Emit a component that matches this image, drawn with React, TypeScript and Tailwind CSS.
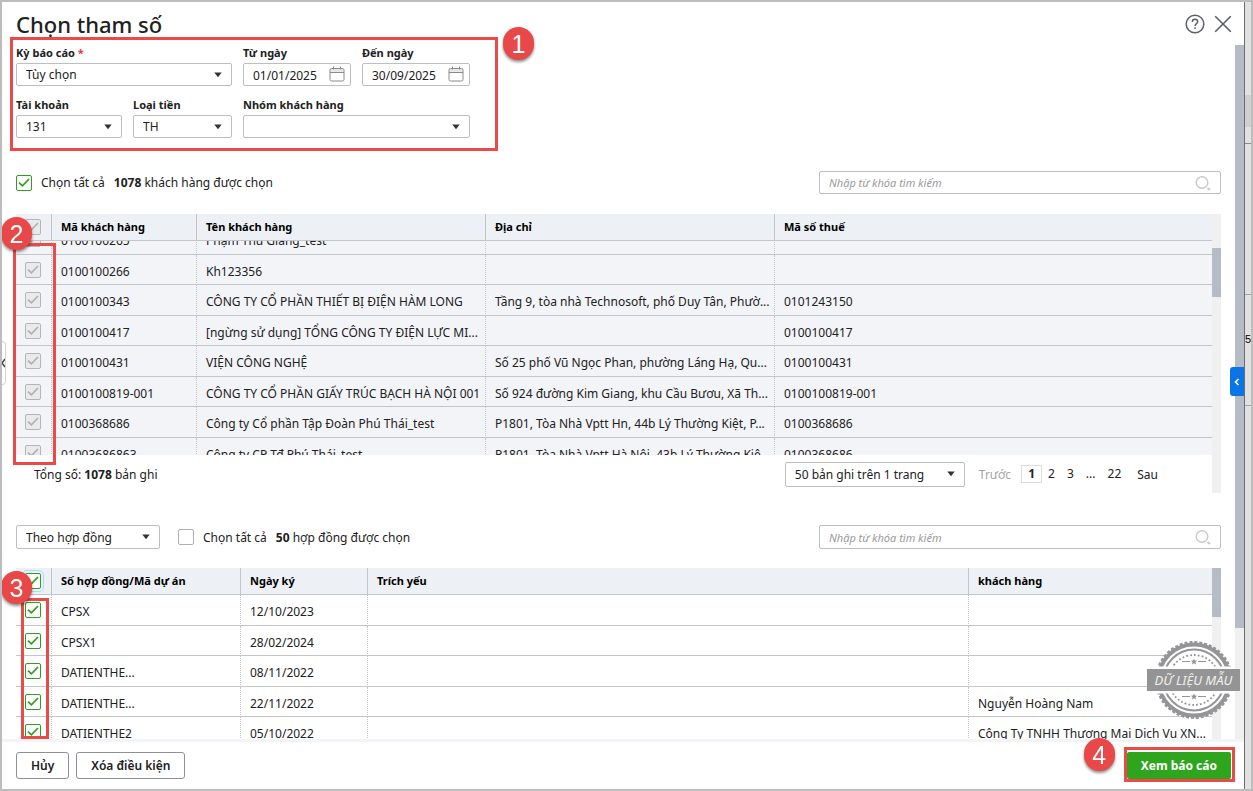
import React, { useLayoutEffect, useRef, useState } from "react";

type Column = { key: string; label: string; width: string };
type Row = { [key: string]: string };

const customerColumns: Column[] = [
  { key: "code", label: "Mã khách hàng", width: "w-[145px]" },
  { key: "name", label: "Tên khách hàng", width: "w-[289px]" },
  { key: "address", label: "Địa chỉ", width: "w-[289px]" },
  { key: "tax", label: "Mã số thuế", width: "" },
];

const customers: Row[] = [
  { code: "0100100265", name: "Phạm Thu Giang_test", address: "", tax: "" },
  { code: "0100100266", name: "Kh123356", address: "", tax: "" },
  { code: "0100100343", name: "CÔNG TY CỔ PHẦN THIẾT BỊ ĐIỆN HÀM LONG", address: "Tầng 9, tòa nhà Technosoft, phố Duy Tân, Phườ...", tax: "0101243150" },
  { code: "0100100417", name: "[ngừng sử dụng] TỔNG CÔNG TY ĐIỆN LỰC MI...", address: "", tax: "0100100417" },
  { code: "0100100431", name: "VIỆN CÔNG NGHỆ", address: "Số 25 phố Vũ Ngọc Phan, phường Láng Hạ, Qu...", tax: "0100100431" },
  { code: "0100100819-001", name: "CÔNG TY CỔ PHẦN GIẤY TRÚC BẠCH HÀ NỘI 001", address: "Số 924 đường Kim Giang, khu Cầu Bươu, Xã Th...", tax: "0100100819-001" },
  { code: "0100368686", name: "Công ty Cổ phần Tập Đoàn Phú Thái_test", address: "P1801, Tòa Nhà Vptt Hn, 44b Lý Thường Kiệt, P...", tax: "0100368686" },
  { code: "01003686863", name: "Công ty CP Tđ Phú Thái_test", address: "P1801, Tòa Nhà Vptt Hà Nội, 43b Lý Thường Kiệ...", tax: "0100368686" },
];

const contractColumns: Column[] = [
  { key: "code", label: "Số hợp đồng/Mã dự án", width: "w-[189px]" },
  { key: "date", label: "Ngày ký", width: "w-[127px]" },
  { key: "summary", label: "Trích yếu", width: "" },
  { key: "customer", label: "khách hàng", width: "w-[243px]" },
];

const contracts: Row[] = [
  { code: "CPSX", date: "12/10/2023", summary: "", customer: "" },
  { code: "CPSX1", date: "28/02/2024", summary: "", customer: "" },
  { code: "DATIENTHE...", date: "08/11/2022", summary: "", customer: "" },
  { code: "DATIENTHE...", date: "22/11/2022", summary: "", customer: "Nguyễn Hoàng Nam" },
  { code: "DATIENTHE2", date: "05/10/2022", summary: "", customer: "Công Ty TNHH Thương Mại Dịch Vụ XN..." },
];

const Checkbox = ({ id, label, defaultChecked, disabled, glow }: { id?: string; label?: string; defaultChecked?: boolean; disabled?: boolean; glow?: boolean }) => (
  <span className="relative block size-4 shrink-0">
    <input
      id={id}
      type="checkbox"
      aria-label={label}
      defaultChecked={defaultChecked}
      disabled={disabled}
      className={`peer block size-4 appearance-none rounded-[2px] border border-[#afafaf] bg-white checked:border-[#2ca01c] disabled:border-[#b5b5b5] disabled:bg-[#e9eaec] ${glow ? "outline outline-offset-2 outline-[#a9dcf8]" : ""}`}
    />
    <svg viewBox="0 0 16 16" className="pointer-events-none absolute inset-0 hidden size-4 fill-none stroke-[#2ca01c] stroke-[1.7] peer-checked:block peer-disabled:stroke-[#b0b0b0]">
      <path d="M3 7.6 6.4 10.8 13 4" />
    </svg>
  </span>
);

const Select = ({ id, label, options, className }: { id: string; label?: string; options: string[]; className: string }) => (
  <div className={`relative ${className}`}>
    <select id={id} aria-label={label} className="block size-full appearance-none rounded-[2px] border border-[#babec5] bg-white pt-px pr-6 pl-[9px] outline-none">
      {options.map((item) => (
        <option key={item}>{item}</option>
      ))}
    </select>
    <svg viewBox="0 0 8 6" className="pointer-events-none absolute top-1/2 right-2.5 h-1.5 w-2 -translate-y-1/2 fill-[#333]">
      <path d="M.3.600h7.400L4 5.300z" />
    </svg>
  </div>
);

const DateField = ({ id, value }: { id: string; value: string }) => (
  <div className="relative h-[23px]">
    <input id={id} type="text" defaultValue={value} className="block size-full rounded-[2px] border border-[#babec5] bg-white pt-px pr-6 pl-[9px] outline-none" />
    <svg viewBox="0 0 16 16" className="pointer-events-none absolute top-[3px] right-1.5 size-4 fill-none stroke-[#8a8a8a]">
      <rect x="1" y="2.5" width="14" height="12.5" rx="1.5" />
      <path d="M2 4.500h12" className="stroke-[#e4e4e4]" strokeWidth="2.5" />
      <path d="M1 6.500h14M4.500.5v3M11.500.5v3" />
    </svg>
  </div>
);

const SearchBox = ({ label, className }: { label: string; className: string }) => (
  <div className={`relative w-[402px] ${className}`}>
    <input type="search" aria-label={label} placeholder="Nhập từ khóa tìm kiếm" className="block size-full rounded-[2px] border border-[#babec5] bg-white pr-8 pl-[9px] text-[11px] outline-none placeholder:text-[#999] placeholder:italic" />
    <svg viewBox="0 0 16 16" className="pointer-events-none absolute top-1/2 right-2.5 size-4 -translate-y-1/2 fill-none stroke-[#c9c9c9] stroke-[1.4]">
      <circle cx="7" cy="7.5" r="5.8" />
      <path d="M12.500 13l2.500 2" strokeWidth="2" />
    </svg>
  </div>
);

const Field = ({ id, label, required, className, children }: { id: string; label: string; required?: boolean; className: string; children: React.ReactNode }) => (
  <div className={`flex flex-col gap-0.5 ${className}`}>
    <label htmlFor={id} className="text-[11px] leading-4 font-bold">
      {label} {required && <span className="text-[#f03232]">*</span>}
    </label>
    {children}
  </div>
);

const Badge = ({ value, className }: { value: number; className: string }) => (
  <span className={`absolute z-30 flex h-[33px] w-[31px] items-center justify-center rounded-full bg-[#e84848] font-['Liberation_Sans',sans-serif] text-[25px] leading-8 text-white shadow-[0_2px_3px_rgba(0,0,0,0.45)] ${className}`}>
    {value}
  </span>
);

const Frame = ({ className }: { className: string }) => (
  <span className={`pointer-events-none absolute z-20 border-3 border-[#ea4b49] ${className}`} />
);

const Scrollbar = ({ thumb }: { thumb: string }) => (
  <div className="w-[9px] shrink-0 bg-[#f0f0f0]">
    <div className={`bg-[#b6bcc5] ${thumb}`} />
  </div>
);

const DataTable = ({ name, columns, rows, locked, offset = 0 }: { name: string; columns: Column[]; rows: Row[]; locked?: boolean; offset?: number }) => {
  const box = useRef<HTMLDivElement>(null);

  useLayoutEffect(() => {
    if (box.current) box.current.scrollTop = offset;
  }, [offset]);

  return (
    <div ref={box} className={`min-h-0 flex-1 overflow-hidden ${locked ? "bg-[#f3f4f8]" : "bg-white"}`}>
      <table aria-label={name} className="w-full table-fixed border-separate border-spacing-0 text-left">
        <thead className="sticky top-0 z-10 bg-[#edf0f5]">
          <tr className="h-[27px]">
            <th className="w-9 border-r border-b border-[#c4c5c8] p-0 pl-[9px]">
              <Checkbox label="Chọn tất cả các dòng" defaultChecked disabled={locked} glow={!locked} />
            </th>
            {columns.map((col) => (
              <th key={col.key} className={`border-r border-b border-[#c4c5c8] p-0 pl-[9px] text-[11px] font-bold text-black last:border-r-0 ${col.width}`}>
                {col.label}
              </th>
            ))}
          </tr>
        </thead>
        <tbody>
          {rows.map((row, index) => (
            <tr key={index} className="odd:h-[31px] even:h-[30px]">
              <td className="border-r border-b border-[#c4c5c8] [border-right-style:dotted] p-0 pl-[9px]">
                <Checkbox label={row.code} defaultChecked disabled={locked} />
              </td>
              {columns.map((col) => (
                <td key={col.key} className="truncate border-r border-b border-[#c4c5c8] [border-right-style:dotted] p-0 pt-1 pl-[9px] last:border-r-0">
                  {row[col.key]}
                </td>
              ))}
            </tr>
          ))}
        </tbody>
      </table>
    </div>
  );
};

const Stamp = () => (
  <div className="pointer-events-none absolute -right-[19px] bottom-[19px] z-20 flex h-20 w-[93px] items-center justify-center">
    <svg viewBox="0 0 80 80" className="absolute size-20 fill-none stroke-[#959597]">
      <circle cx="40" cy="40" r="35.5" strokeWidth="4" className="fill-white" />
      <circle cx="40" cy="40" r="37.8" strokeWidth="2.4" strokeDasharray="3 1.95" />
      <circle cx="40" cy="40" r="30.5" strokeWidth="2" />
      <circle cx="40" cy="40" r="25" strokeWidth="1.8" strokeDasharray="1.8 2.1" />
      <path d="M28 21.500h8M44 21.500h8M28 56.500h8M44 56.500h8" />
      <path d="M40 18.500l.9 2 2.200.2-1.600 1.500.5 2.200-2-1.200-2 1.200.5-2.200-1.600-1.500 2.200-.2zM40 53.500l.9 2 2.200.2-1.600 1.500.5 2.200-2-1.200-2 1.200.5-2.200-1.600-1.500 2.200-.2z" className="fill-[#959597] stroke-none" />
      <path d="M2 26.500h76v27H2z" className="fill-white stroke-none" />
    </svg>
    <span className="relative w-full bg-[#949496] text-center text-[13px] leading-[22px] text-[#f1f0ea] italic">DỮ LIỆU MẪU</span>
  </div>
);

const App: React.FC = () => {
  const [page, setPage] = useState("1");

  return (
    <div className="flex h-screen overflow-hidden border-2 border-[#bdbdbd] bg-white font-['Noto_Sans',sans-serif] text-[12px] leading-4 text-[#212121]">
      <main className="relative flex min-w-0 flex-1 flex-col">
        <header className="flex h-[43px] shrink-0 items-center justify-between pr-[11px] pl-3.5">
          <h1 className="text-[22px] leading-10 font-medium">Chọn tham số</h1>
          <div className="flex items-center gap-2 text-[#5c5f66]">
            <button type="button" aria-label="Trợ giúp" className="size-5">
              <svg viewBox="0 0 20 20" className="size-5 fill-none stroke-current stroke-[1.5]">
                <circle cx="10" cy="10" r="8.8" />
                <path d="M7.300 8c0-1.700 1.200-2.700 2.700-2.700s2.700 1 2.700 2.400c0 2-2.600 2-2.600 4.300M10.100 13.300v1.700" />
              </svg>
            </button>
            <button type="button" aria-label="Đóng" className="size-5">
              <svg viewBox="0 0 20 20" className="size-5 fill-none stroke-current stroke-[1.6]">
                <path d="M2.200 2.200l15.600 15.600M17.800 2.200l-15.600 15.600" />
              </svg>
            </button>
          </div>
        </header>

        <div className="flex min-h-0 flex-1">
          <div className="flex min-w-0 flex-1 flex-col px-3.5">
            <form className="relative flex w-[454px] shrink-0 flex-wrap gap-x-[11px] gap-y-[11px]">
              <Field id="period" label="Kỳ báo cáo" required className="w-[216px]">
                <Select id="period" options={["Tùy chọn"]} className="h-[23px]" />
              </Field>
              <Field id="from" label="Từ ngày" className="w-[108px]">
                <DateField id="from" value="01/01/2025" />
              </Field>
              <Field id="to" label="Đến ngày" className="w-[108px]">
                <DateField id="to" value="30/09/2025" />
              </Field>
              <Field id="account" label="Tài khoản" className="w-[106px]">
                <Select id="account" options={["131"]} className="h-[23px]" />
              </Field>
              <Field id="currency" label="Loại tiền" className="w-[99px]">
                <Select id="currency" options={["TH"]} className="h-[23px]" />
              </Field>
              <Field id="group" label="Nhóm khách hàng" className="w-[227px]">
                <Select id="group" options={[""]} className="h-[23px]" />
              </Field>
              <Frame className="-top-2 -right-7 -bottom-[13px] -left-1.5" />
              <Badge value={1} className="-top-[18px] -right-16" />
            </form>

            <div className="mt-[33px] flex shrink-0 items-center justify-between">
              <div className="flex items-center">
                <Checkbox id="all-customers" defaultChecked />
                <label htmlFor="all-customers" className="pl-[9px]">Chọn tất cả</label>
                <span className="pl-[9px]"><b>1078</b> khách hàng được chọn</span>
              </div>
              <SearchBox label="Tìm khách hàng" className="h-[23px]" />
            </div>

            <section className="relative mt-5 flex h-[279px] shrink-0">
              <div className="flex min-w-0 flex-1 flex-col">
                <DataTable name="Khách hàng" columns={customerColumns} rows={customers} locked offset={17} />
                <div className="flex h-[38px] shrink-0 items-center justify-between pr-[54px] pl-[18px]">
                  <span className="pt-0.5">Tổng số: <b>1078</b> bản ghi</span>
                  <nav className="flex items-center">
                    <Select id="page-size" label="Số bản ghi" options={["50 bản ghi trên 1 trang"]} className="h-[25px] w-[180px]" />
                    <button type="button" disabled className="ml-3.5 pt-0.5 text-[#a5a5a5]">Trước</button>
                    <div className="mr-2.5 ml-2.5 flex items-center">
                      {["1", "2", "3", "...", "22"].map((item) => (
                        <button
                          key={item}
                          type="button"
                          onClick={() => setPage(item)}
                          className={page === item ? "w-[21px] border border-[#dcdcdc] font-bold" : "px-1.5"}
                        >
                          {item}
                        </button>
                      ))}
                    </div>
                    <button type="button" className="pt-0.5">Sau</button>
                  </nav>
                </div>
              </div>
              <Scrollbar thumb="mt-[34px] h-[49px]" />
              <Frame className="top-[29px] bottom-7 -left-[3px] w-[43px]" />
              <Badge value={2} className="top-[3px] -left-[15px]" />
            </section>

            <div className="mt-8 flex shrink-0 items-center justify-between">
              <div className="flex items-center">
                <Select id="mode" label="Kiểu chọn" options={["Theo hợp đồng"]} className="mr-[18px] h-6 w-36" />
                <Checkbox id="all-contracts" />
                <label htmlFor="all-contracts" className="pt-px pl-[9px]">Chọn tất cả</label>
                <span className="pt-px pl-[9px]"><b>50</b> hợp đồng được chọn</span>
              </div>
              <SearchBox label="Tìm hợp đồng" className="h-6" />
            </div>

            <section className="relative mt-[19px] flex min-h-0 flex-1">
              <DataTable name="Hợp đồng" columns={contractColumns} rows={contracts} />
              <Scrollbar thumb="h-[49px]" />
              <Frame className="top-[30px] bottom-0 left-[5px] w-7" />
              <Badge value={3} className="top-[3px] -left-[15px]" />
              <Stamp />
            </section>
          </div>
          <Scrollbar thumb="h-[84%]" />
        </div>

        <footer className="flex shrink-0 items-center justify-between border-t-3 border-[#f3f4f8] py-2.5 pr-[13px] pl-3.5">
          <div className="flex gap-[7px]">
            <button type="button" className="h-[27px] rounded-[3px] border border-[#8d9096] px-3.5 font-semibold">Hủy</button>
            <button type="button" className="h-[27px] rounded-[3px] border border-[#8d9096] px-3.5 font-semibold">Xóa điều kiện</button>
          </div>
          <div className="relative">
            <button type="button" className="block h-[27px] rounded-[2px] bg-[#2ea51c] px-3.5 font-bold text-white">Xem báo cáo</button>
            <Frame className="-top-[5px] -right-1 -bottom-[3px] -left-[3px]" />
            <Badge value={4} className="-top-3.5 right-full mr-3" />
          </div>
        </footer>

        <button type="button" aria-label="Mở bảng bên phải" className="absolute top-[365px] right-0 flex h-[29px] w-3.5 items-center justify-center rounded-l-[3px] bg-[#0a75e6]">
          <svg viewBox="0 0 8 8" className="size-2 fill-none stroke-white stroke-[1.6]">
            <path d="M5.500 1 2.500 4l3 3" />
          </svg>
        </button>
        <button type="button" aria-label="Thu gọn menu" className="absolute top-[339px] left-0 flex h-11 w-1 items-center overflow-hidden rounded-r-[4px] border border-l-0 border-[#d5d5d5]">
          <svg viewBox="0 0 4 10" className="h-2.5 w-1 shrink-0 fill-none stroke-[#444] stroke-[1.5]">
            <path d="M3 1 0 5l3 4" />
          </svg>
        </button>
      </main>

      <aside className="flex w-[7px] shrink-0 flex-col overflow-hidden border-l border-[#6d6d6d] bg-[#e1e1e1]">
        <div className="mt-[93px] h-8 bg-[#d0d0d0]" />
        <div className="mt-4 border-t border-[#8a8a8a]" />
        <div className="mt-[150px] border-t border-[#9aa7b5]" />
        <span className="mt-9 font-['Liberation_Sans',sans-serif] text-[11px] text-black">5</span>
        <div className="mt-[58px] border-t border-[#9aa7b5]" />
      </aside>
    </div>
  );
};

export default App;
